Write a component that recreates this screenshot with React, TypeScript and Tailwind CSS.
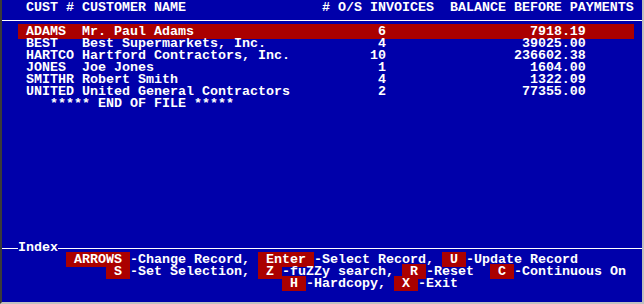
import React from "react";

type Seg = [number, string];

function build(segs: Seg[], width = 80): string {
  const arr = Array(width).fill(" ");
  for (const [col, text] of segs) {
    for (let i = 0; i < text.length; i++) {
      if (col + i < width) arr[col + i] = text[i];
    }
  }
  return arr.join("");
}

const records = [
  { code: "ADAMS", name: "Mr. Paul Adams", count: "6", bal: "7918.19" },
  { code: "BEST", name: "Best Supermarkets, Inc.", count: "4", bal: "39025.00" },
  { code: "HARTCO", name: "Hartford Contractors, Inc.", count: "10", bal: "236602.38" },
  { code: "JONES", name: "Joe Jones", count: "1", bal: "1604.00" },
  { code: "SMITHR", name: "Robert Smith", count: "4", bal: "1322.09" },
  { code: "UNITED", name: "United General Contractors", count: "2", bal: "77355.00" },
];

function recordLine(r: (typeof records)[number]) {
  return build([
    [3, r.code],
    [10, r.name],
    [48 - r.count.length, r.count],
    [73 - r.bal.length, r.bal],
  ]);
}

function Row({ children }: { children?: React.ReactNode }) {
  return <div className="h-[12px] whitespace-pre leading-[12px]">{children}</div>;
}

function Key({ k }: { k: string }) {
  return <span className="bg-[#aa0000]">{k}</span>;
}

function HLine() {
  return (
    <div className="h-[12px] flex items-start">
      <div className="mt-[6px] h-[1px] flex-1 bg-white" />
    </div>
  );
}

export default function App() {
  const header = build([
    [3, "CUST # CUSTOMER NAME"],
    [40, "# O/S INVOICES"],
    [56, "BALANCE BEFORE PAYMENTS"],
  ]);
  const first = recordLine(records[0]);
  return (
    <div
      className="w-[644px] h-[304px] bg-[#0000aa] text-white font-bold text-[13.333px] border-l-2 border-l-[#3a3a3a] border-r-2 border-r-[#c0c0c0] border-b-2 border-b-[#c0c0c0] pt-[2px] overflow-hidden"
      style={{ fontFamily: '"Liberation Mono", monospace' }}
    >
      <Row>{header}</Row>
      <HLine />
      <Row>
        {first.slice(0, 2)}
        <span className="bg-[#aa0000]">{first.slice(2, 79)}</span>
      </Row>
      {records.slice(1).map((r) => (
        <Row key={r.code}>{recordLine(r)}</Row>
      ))}
      <Row>{build([[6, "***** END OF FILE *****"]])}</Row>
      {Array.from({ length: 11 }).map((_, i) => (
        <Row key={"e" + i} />
      ))}
      <div className="h-[12px] flex items-start">
        <div className="mt-[6px] h-[1px] w-[16px] bg-white" />
        <span className="leading-[12px]">Index</span>
        <div className="mt-[6px] h-[1px] flex-1 bg-white" />
      </div>
      <Row>
        {"        "}
        <Key k=" ARROWS " />
        {"-Change Record, "}
        <Key k=" Enter " />
        {"-Select Record, "}
        <Key k=" U " />
        {"-Update Record"}
      </Row>
      <Row>
        {"             "}
        <Key k=" S " />
        {"-Set Selection, "}
        <Key k=" Z " />
        {"-fuZZy search, "}
        <Key k=" R " />
        {"-Reset  "}
        <Key k=" C " />
        {"-Continuous On"}
      </Row>
      <Row>
        {"                                   "}
        <Key k=" H " />
        {"-Hardcopy, "}
        <Key k=" X " />
        {"-Exit"}
      </Row>
      <Row />
    </div>
  );
}
